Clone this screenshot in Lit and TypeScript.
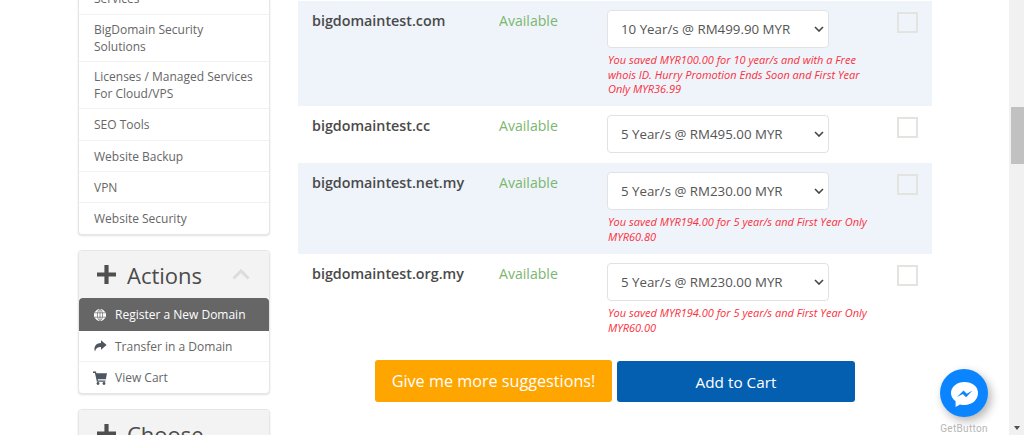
import { LitElement, html, css, svg } from "lit";
import { customElement } from "lit/decorators.js";

const rows = [
  { name: "bigdomaintest.com", opt: "10 Year/s @ RM499.90 MYR", note: "You saved MYR100.00 for 10 year/s and with a Free whois ID. Hurry Promotion Ends Soon and First Year Only MYR36.99", cls: "r1 alt" },
  { name: "bigdomaintest.cc", opt: "5 Year/s @ RM495.00 MYR", note: "", cls: "r2" },
  { name: "bigdomaintest.net.my", opt: "5 Year/s @ RM230.00 MYR", note: "You saved MYR194.00 for 5 year/s and First Year Only MYR60.80", cls: "r3 alt" },
  { name: "bigdomaintest.org.my", opt: "5 Year/s @ RM230.00 MYR", note: "You saved MYR194.00 for 5 year/s and First Year Only MYR60.00", cls: "r4" },
];

const plus = svg`<svg class="plus" viewBox="0 0 20 20"><path d="M7.8 0h4.4v7.8H20v4.4h-7.8V20H7.8v-7.8H0V7.8h7.8z" fill="currentColor"/></svg>`;

@customElement("app-root")
export class AppRoot extends LitElement {
  static styles = css`
    :host { display: block; height: 435px; overflow: hidden; background: #fff; font-family: "Open Sans", "Noto Sans", sans-serif; color: #555; }
    .page { display: flex; height: 435px; overflow: hidden; }
    .content { flex: 1; display: flex; padding-left: 78px; gap: 28px; min-width: 0; }
    .side { width: 192px; flex: none; }
    .card { border: 1px solid #e6e6e6; border-radius: 4px; box-shadow: 0 1px 2px rgba(0,0,0,.12); background: #fff; overflow: hidden; margin-bottom: 15px; }
    .first { margin-top: -32px; border-top: 0; }
    .item { display: flex; align-items: center; padding: 0 15px; font-size: 12px; line-height: 17px; color: #666; height: 31px; border-bottom: 1px solid #f2f2f2; box-sizing: border-box; }
    .item:last-child { border-bottom: 0; }
    .item.tall { height: 47px; }
    .item.top { height: 47px; align-items: flex-end; padding-bottom: 7px; }
    .item.seo { height: 32px; }
    .head { display: flex; align-items: center; height: 47px; padding: 0 19px 0 18px; background: #f3f3f3; color: #4b4b4b; font-size: 22px; font-weight: 500; }
    .plus { width: 19px; height: 19px; margin-right: 11px; color: #4f4f4f; flex: none; }
    .chev { margin-left: auto; width: 18px; height: 11px; }
    .item.active { background: #666; color: #fff; height: 33px; border-radius: 4px 4px 0 0; border-bottom: 0; }
    .ic { width: 14px; height: 14px; margin-right: 8px; margin-left: -1px; flex: none; color: #4d5560; }
    .active .ic { color: #fff; }
    .main { width: 634px; flex: none; padding-top: 1px; }
    .row { display: grid; grid-template-columns: 187px 108px 290px 21px; padding-left: 14px; box-sizing: border-box; }
    .alt { background: #eff4fa; }
    .r1 { height: 105px; padding-top: 9px; }
    .r2 { height: 57px; padding-top: 9px; }
    .r3 { height: 91px; padding-top: 9px; }
    .r4 { height: 106px; padding-top: 9px; }
    .name { font-size: 14.3px; font-weight: 600; color: #4a4a4a; line-height: 20px; margin-top: 1px; }
    .status { font-size: 14.1px; color: #7cb66f; line-height: 20px; margin-top: 1px; }
    select {
      appearance: none; width: 222px; height: 38px; font: 13.3px "Open Sans", sans-serif; color: #555; background-color: #fff;
      background-image: url("data:image/svg+xml,%3Csvg xmlns='http://www.w3.org/2000/svg' width='10' height='6'%3E%3Cpath d='M1 1l4 4 4-4' fill='none' stroke='%23444' stroke-width='1.6'/%3E%3C/svg%3E");
      background-repeat: no-repeat; background-position: right 4px center;
      border: 1px solid #e2e2e2; border-radius: 4px; padding: 0 13px; display: block;
    }
    .note { width: 262px; margin: 5px 0 0 1px; font-size: 11px; line-height: 14.6px; font-style: italic; color: #fa2f3c; }
    .check { width: 21px; height: 21px; box-sizing: border-box; border: 2px solid #e3e3e0; background: #fff; margin-top: 2px; }
    .alt .check { background: #eff4fa; }
    .actions { display: flex; justify-content: center; align-items: flex-end; gap: 5px; }
    .btn { border: 0; border-radius: 3px; color: #fff; font-family: "Open Sans", sans-serif; padding: 0; display: block; }
    .orange { background: #ffa500; height: 42px; width: 237px; font-size: 16.2px; }
    .blue { background: #045fb0; height: 41px; width: 238px; font-size: 15.3px; }
    .bar { width: 15px; flex: none; background: #f1f1f1; position: relative; }
    .thumb { position: absolute; left: 2px; right: 0; top: 107px; height: 57px; background: #c1c1c1; }
    .down { position: absolute; left: 5px; bottom: 5px; border: 3.5px solid transparent; border-top: 4px solid #505050; border-bottom: 0; }
    .fab { position: absolute; left: 934px; top: 369px; width: 60px; display: flex; flex-direction: column; align-items: center; }
    .circle { width: 48px; height: 48px; border-radius: 50%; background: #0a84ff; box-shadow: 3px 4px 10px rgba(0,0,0,.3); display: flex; align-items: center; justify-content: center; }
    .circle svg { width: 30px; height: 30px; }
    .gb { font: 10px Roboto, sans-serif; color: #b5b5b5; margin-top: 6px; line-height: 12px; letter-spacing: .3px; }
  `;

  render() {
    return html`
      <div class="page">
        <div class="content">
          <aside class="side">
            <div class="card first">
              <div class="item top">Services</div>
              <div class="item tall">BigDomain Security Solutions</div>
              <div class="item tall">Licenses / Managed Services For Cloud/VPS</div>
              <div class="item seo">SEO Tools</div>
              <div class="item">Website Backup</div>
              <div class="item">VPN</div>
              <div class="item">Website Security</div>
            </div>
            <div class="card">
              <div class="head">${plus}Actions
                <svg class="chev" viewBox="0 0 18 11"><path d="M1.5 9.5 9 2l7.5 7.5" fill="none" stroke="#dcdcdc" stroke-width="3"/></svg>
              </div>
              <div class="item active">
                <svg class="ic" viewBox="0 0 14 14" fill="none" stroke="currentColor"><circle cx="7" cy="7" r="5.5" fill="currentColor"/><g stroke="#777" stroke-width=".8"><ellipse cx="7" cy="7" rx="2.6" ry="5.5"/><path d="M1.8 4.8h10.4M1.8 9.2h10.4M7 1.5v11"/></g></svg>
                Register a New Domain</div>
              <div class="item">
                <svg class="ic" viewBox="0 0 14 14"><path d="M8 1.2 13.6 6 8 10.8V8C5 8 3 8.6 2 12.6 .4 8 2.6 4.2 8 4z" fill="currentColor"/></svg>
                Transfer in a Domain</div>
              <div class="item">
                <svg class="ic" viewBox="0 0 14 14"><path d="M0 .6h3l.4 1.600H14l-1.200 6H4.700l.3 1.200h7.400v1.300H3.900L1.900 1.900H0z" fill="currentColor"/><circle cx="5" cy="12.500" r="1.400" fill="currentColor"/><circle cx="11" cy="12.500" r="1.400" fill="currentColor"/></svg>
                View Cart</div>
            </div>
            <div class="card">
              <div class="head">${plus}Choose</div>
            </div>
          </aside>
          <main class="main">
            ${rows.map((r) => html`
              <div class="row ${r.cls}">
                <div class="name">${r.name}</div>
                <div class="status">Available</div>
                <div>
                  <select><option>${r.opt}</option></select>
                  ${r.note ? html`<p class="note">${r.note}</p>` : ""}
                </div>
                <div class="check"></div>
              </div>`)}
            <div class="actions">
              <button class="btn orange">Give me more suggestions!</button>
              <button class="btn blue">Add to Cart</button>
            </div>
          </main>
        </div>
        <div class="bar"><div class="thumb"></div><div class="down"></div></div>
      </div>
      <div class="fab">
        <div class="circle">
          <svg viewBox="0 0 30 30"><path d="M15.5 4C8 4 2 8.8 2 15c0 3.4 1.700 6.200 4.600 8.200V29l4.400-2.600c1.400.4 2.900.6 4.500.6 7.500 0 13.500-5 13.500-12S23 4 15.500 4z" fill="#fff"/><path d="M8 19 14.500 12.500l3.300 3.200 5.700-3.200-6.400 6.700-3.300-3.300z" fill="#0a84ff"/></svg>
        </div>
        <div class="gb">GetButton</div>
      </div>
    `;
  }
}
